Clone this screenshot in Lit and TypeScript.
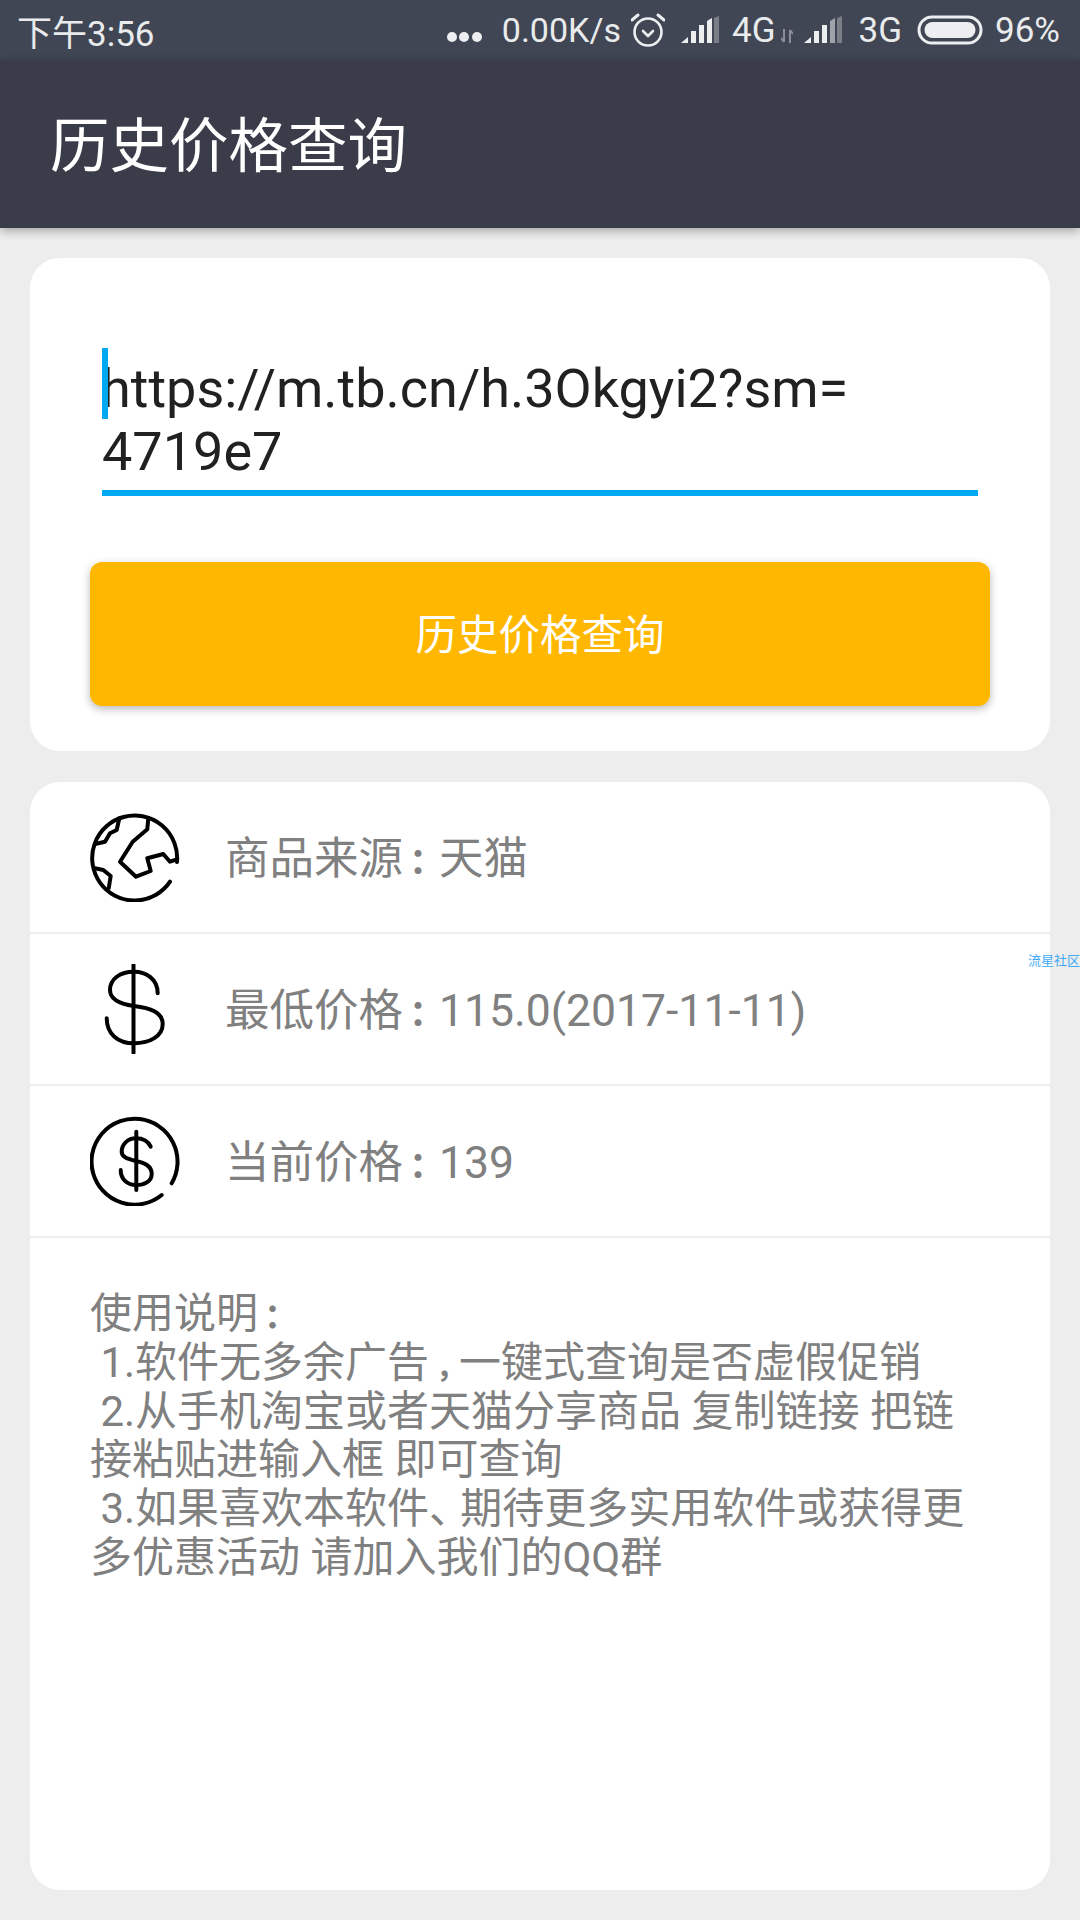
import { LitElement, html, css, svg } from "lit";
import { customElement } from "lit/decorators.js";

const sig = (x: number) => svg`
  <path d="M1 27 L8 21 V27 Z" fill="#eceef0"/>
  <rect x="11" y="15" width="5" height="12" fill="#eceef0"/>
  <rect x="19" y="9" width="5" height="18" fill="#eceef0"/>
  <path d="M27 5 L32 2 V27 H27 Z" fill="#eceef0" opacity="${x}"/>
  <path d="M34 2 L39 0 V27 H34 Z" fill="#7b7e87"/>`;

@customElement("app-root")
export class AppRoot extends LitElement {
  static styles = css`
    :host {
      display: block;
      position: relative;
      width: 1080px;
      height: 1920px;
      background: #ededed;
      font-family: Roboto, "Noto Sans CJK SC", sans-serif;
      overflow: hidden;
    }
    .status {
      height: 60px;
      background: #404653;
      color: #e9ebed;
      display: flex;
      align-items: center;
      padding: 0 20px 0 17px;
      font-size: 35px;
      box-sizing: border-box;
    }
    .spacer { flex: 1; }
    .dots { display: flex; gap: 2.5px; margin-top: 14px; margin-right: 20px; }
    .dots i { width: 10px; height: 10px; border-radius: 50%; background: #eceef0; display: block; }
    .speed { margin-right: 10px; font-size: 34px; }
    .alarm { margin-right: 15px; }
    .net1 { margin-left: 12px; }
    .arrows { margin: 12px 10px 0 5px; }
    .g3 { margin-left: 16px; }
    .batt { margin-left: 15px; margin-right: 12px; }
    .svgb { display: block; }
    .bar {
      height: 168px;
      box-sizing: border-box;
      background: #3a3d49;
      color: #fff;
      font-size: 59.5px;
      display: flex;
      align-items: center;
      padding: 0 0 6px 50px;
      box-shadow: 0 3px 9px rgba(0, 0, 0, 0.3);
      position: relative;
    }
    .card {
      background: #fff;
      border-radius: 30px;
      margin: 0 30px;
    }
    .c1 { margin-top: 30px; padding: 99px 60px 44px; height: 493px; box-sizing: border-box; }
    .c2 { margin-top: 31px; height: 1108px; }
    .input {
      position: relative;
      margin: 0 12px;
      border-bottom: 6px solid #03a9f0;
      padding-bottom: 7px;
      font-size: 54px;
      line-height: 63px;
      color: #212121;
      text-indent: -1px;
    }
    .caret {
      position: absolute;
      left: 0;
      top: -9px;
      width: 6px;
      height: 71px;
      background: #03a9f0;
    }
    .btn {
      margin-top: 66px;
      height: 144px;
      box-sizing: border-box;
      padding-bottom: 4px;
      background: #ffb700;
      border-radius: 12px;
      color: #fff;
      font-size: 41.5px;
      display: flex;
      align-items: center;
      justify-content: center;
      box-shadow: 0 3px 8px rgba(0, 0, 0, 0.28);
    }
    .row {
      height: 152px;
      box-sizing: border-box;
      border-bottom: 2px solid #eeeeee;
      display: flex;
      align-items: center;
      padding-left: 60px;
      gap: 45px;
      color: #808080;
      font-size: 44.5px;
    }
    .row .t { padding-bottom: 6px; }
    .row svg { width: 90px; height: 90px; display: block; flex: none; margin-bottom: 1px; }
    .row svg * { fill: none; stroke: #000; stroke-width: 4; stroke-linecap: round; stroke-linejoin: round; }
    .c {
      font-weight: 700;
      font-size: 36px;
      line-height: 0;
      padding-left: 6px;
      margin-right: -6px;
    }
    .desc {
      padding: 52px 0 0 60px;
      color: #808080;
      font-size: 42px;
      line-height: 48.8px;
      white-space: pre;
    }
    .desc .c { font-size: 34px; }
    .desc .m { font-size: 30px; padding-left: 7px; margin-right: -7px; }
    .n { margin-right: -11px; }
    .mark {
      position: absolute;
      right: 0;
      top: 953px;
      font-size: 13px;
      line-height: 16px;
      color: #3fa9f5;
    }
  `;

  render() {
    return html`
      <div class="status">
        <span>下午3:56</span>
        <span class="spacer"></span>
        <span class="dots"><i></i><i></i><i></i></span>
        <span class="speed">0.00K/s</span>
        <svg class="alarm svgb" width="34" height="34" viewBox="0 0 34 34" fill="none" stroke="#eceef0" stroke-width="2.6" stroke-linecap="round" stroke-linejoin="round">
          <circle cx="17" cy="19" r="13.5"/>
          <path d="M12 18 L17 23 L22 18"/>
          <path d="M1 7 L7 2 M33 7 L27 2" stroke-width="3"/>
        </svg>
        <svg class="svgb" width="40" height="28" viewBox="0 0 40 28">${sig(1)}</svg>
        <span class="net1">4G</span>
        <svg class="arrows svgb" width="12" height="14" viewBox="0 0 12 14" fill="none" stroke="#8b8e96" stroke-width="2">
          <path d="M3 0 V13 M0 9 L3 13 M9 14 V1 M12 5 L9 1"/>
        </svg>
        <svg class="svgb" width="40" height="28" viewBox="0 0 40 28">${sig(0.55)}</svg>
        <span class="g3">3G</span>
        <svg class="batt svgb" width="66" height="30" viewBox="0 0 66 30">
          <rect x="2" y="2" width="62" height="26" rx="13" fill="none" stroke="#eceef0" stroke-width="3"/>
          <rect x="7.5" y="7" width="51" height="16" rx="8" fill="#eceef0"/>
        </svg>
        <span>96%</span>
      </div>
      <div class="bar">历史价格查询</div>
      <div class="card c1">
        <div class="input">
          <div class="caret"></div>
          https://m.tb.cn/h.3Okgyi2?sm=<br />4719e7
        </div>
        <div class="btn">历史价格查询</div>
      </div>
      <div class="card c2">
        <div class="row">
          <svg viewBox="0 0 90 90">
            <path d="M80 69.7 A42.5 42.5 0 1 1 87 50"/>
            <path d="M29.3 6.3 L26.7 18 L20 21.3 L15 29.7 L5 32"/>
            <path d="M58.3 6.3 L57.3 17.3 L42.7 29.7 L30 49.7 L46 64.7 L60.7 59 L57.3 46.3 L73.3 42 L80 49.7 L86.7 47.3"/>
            <path d="M5 56.3 L13.3 58 L20.7 64 L18.7 76.3"/>
          </svg>
          <span class="t">商品来源<span class="c">：</span>天猫</span>
        </div>
        <div class="row">
          <svg viewBox="0 0 90 90">
            <path d="M43.5 1 V88.7"/>
            <path d="M67.7 29.3 C67.7 15 56 7.7 44 7.7 C30 7.7 20 15 20 26 C20 36 30 40 44 42 C60 44 72.7 48 72.7 60 C72.7 72 60 79.3 44 79.3 C28 79.3 16.7 70 16.7 54.3"/>
          </svg>
          <span class="t">最低价格<span class="c">：</span>115.0(2017-11-11)</span>
        </div>
        <div class="row">
          <svg viewBox="0 0 90 90">
            <path d="M71.7 79 A43 43 0 1 1 81.7 67.3"/>
            <path d="M46.3 15.7 V74"/>
            <path d="M60.7 30.7 C58 25 52 22.3 46 22.3 C38 22.3 31.7 28 31.7 35.7 C31.7 41 37 43 46 45 C55 47 61.7 50 61.7 58 C61.7 65 55 69 46 69 C37 69 30.7 63 30.7 54"/>
          </svg>
          <span class="t">当前价格<span class="c">：</span>139</span>
        </div>
        <div class="desc">使用说明<span class="c">：</span>
 1.软件无多余广告<span class="c m">，</span>一键式查询是否虚假促销
 2.从手机淘宝或者天猫分享商品 复制链接 把链
接粘贴进输入框 即可查询
 3.如果喜欢本软件<span class="n">、</span>期待更多实用软件或获得更
多优惠活动 请加入我们的QQ群</div>
      </div>
      <div class="mark">流星社区</div>
    `;
  }
}
